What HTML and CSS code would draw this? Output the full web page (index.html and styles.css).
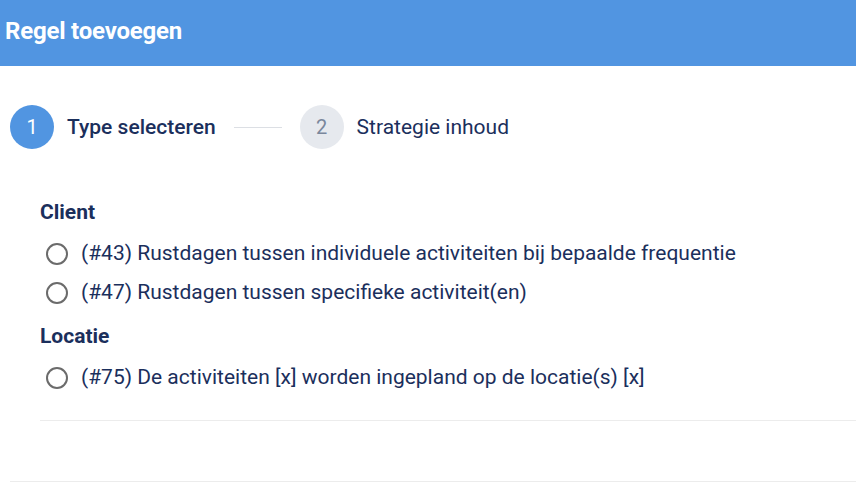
FILE: index.html
```html
<!DOCTYPE html>
<html lang="nl">
<head>
    <meta charset="UTF-8">
    <meta name="viewport" content="width=device-width, initial-scale=1.0">
    <title>Regel toevoegen</title>
    <link rel="stylesheet" href="styles.css">
</head>
<body>
    <div class="dialog">
        <div class="header">Regel toevoegen</div>
        <div class="stepper">
            <div class="step active">
                <span class="circle">1</span>
                <span class="label">Type selecteren</span>
            </div>
            <div class="connector"></div>
            <div class="step">
                <span class="circle">2</span>
                <span class="label">Strategie inhoud</span>
            </div>
        </div>
        <div class="content">
            <div class="group">
                <h3>Client</h3>
                <label class="option"><span class="radio"></span>(#43) Rustdagen tussen individuele activiteiten bij bepaalde frequentie</label>
                <label class="option"><span class="radio"></span>(#47) Rustdagen tussen specifieke activiteit(en)</label>
            </div>
            <div class="group">
                <h3>Locatie</h3>
                <label class="option"><span class="radio"></span>(#75) De activiteiten [x] worden ingepland op de locatie(s) [x]</label>
            </div>
            <div class="divider"></div>
        </div>
        <div class="footer"></div>
    </div>
</body>
</html>
```

FILE: styles.css
```css
*{
    margin: 0;
    padding: 0;
    box-sizing: border-box;
}
body{
    font-family: Roboto, "Liberation Sans", sans-serif;
    background: #fff;
    color: #1b2f5c;
}
.header{
    height: 66px;
    background-color: #5195e1;
    color: #fff;
    font-size: 24px;
    line-height: 28px;
    font-weight: 700;
    padding: 17px 0 0 5px;
    letter-spacing: -0.2px;
}
.stepper{
    display: flex;
    align-items: center;
    padding: 39px 0 0 10px;
}
.step{
    display: flex;
    align-items: center;
    gap: 13px;
}
.circle{
    width: 44px;
    height: 44px;
    border-radius: 50%;
    background-color: #e6e9ee;
    color: #7a879c;
    font-size: 20px;
    display: flex;
    align-items: center;
    justify-content: center;
}
.step.active .circle{
    background-color: #5195e1;
    color: #fff;
}
.label{
    font-size: 21px;
    color: #1b2f5c;
}
.step.active .label{
    font-weight: 500;
}
.connector{
    width: 48px;
    height: 1px;
    background-color: #dcdfe4;
    margin: 0 18px;
}
.content{
    padding: 49px 0 0 40px;
}
.group h3{
    font-size: 21px;
    font-weight: 700;
    color: #1b2f5c;
    line-height: 28px;
    margin-bottom: 8px;
}
.option{
    display: flex;
    align-items: center;
    font-size: 21px;
    line-height: 39px;
    color: #1b2f5c;
    cursor: pointer;
}
.radio{
    flex: none;
    width: 22px;
    height: 22px;
    border: 2.5px solid #6b6b6b;
    border-radius: 50%;
    margin: 0 13px 0 6px;
}
.group + .group{
    margin-top: 10px;
}
.divider{
    height: 1px;
    background-color: #ececec;
    margin-top: 23px;
}
.footer{
    height: 1px;
    background-color: #ececec;
    margin: 60px 0 0 10px;
}
```
